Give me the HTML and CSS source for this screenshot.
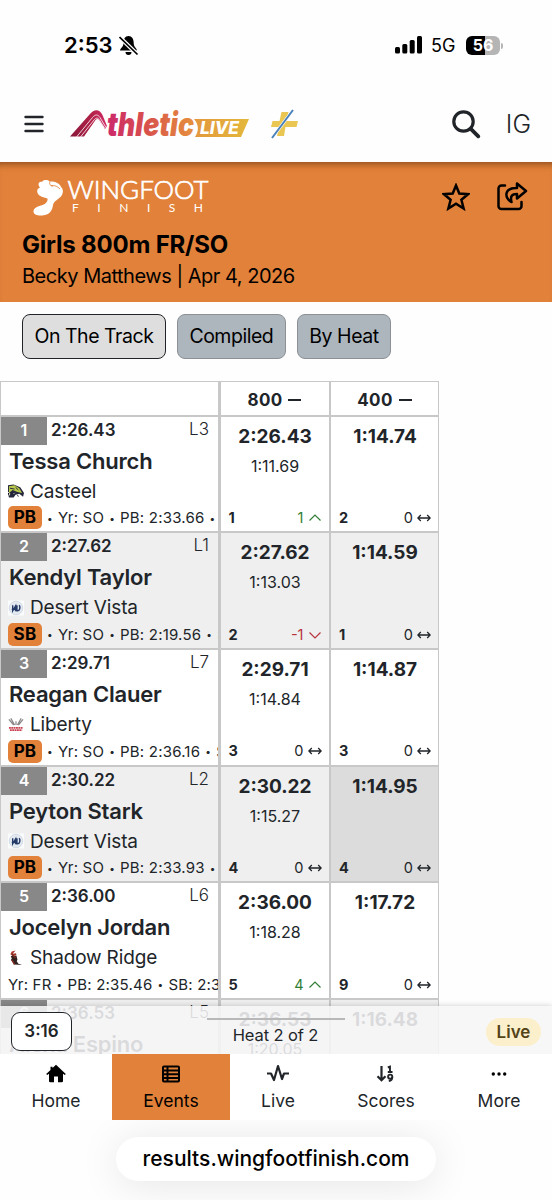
FILE: index.html
```html
<!DOCTYPE html>
<html lang="en">
  <head>
    <meta charset="UTF-8" />
    <meta name="viewport" content="width=device-width, initial-scale=1.0" />
    <title>Girls 800m FR/SO</title>
    <link rel="stylesheet" href="styles.css" />
  </head>
  <body>
    <svg class="sprite" width="0" height="0">
      <symbol id="up" viewBox="0 0 14 14">
        <path d="M1.500 9.500 7 4l5.500 5.500" fill="none" stroke="currentColor" stroke-width="1.200" />
      </symbol>
      <symbol id="down" viewBox="0 0 14 14">
        <path d="M1.500 4.500 7 10l5.500-5.500" fill="none" stroke="currentColor" stroke-width="1.200" />
      </symbol>
      <symbol id="same" viewBox="0 0 14 14">
        <path d="M1 7h12M3.800 4 .8 7l3 3M10.200 4l3 3-3 3" fill="none" stroke="currentColor" stroke-width="1.300" />
      </symbol>
      <symbol id="casteel" viewBox="0 0 17 16">
        <path d="M0 2 6 1l7 3 4 6-1 4-4-3-4 1-2 3H1l-1-4z" fill="#24263b" />
        <path d="M1 3 7 2l5 3 3 5-5-1-5-2-4 3z" fill="#b7c84b" />
        <path d="m2 5 5 1M8 4l3 3M2 11l1 2M10 12l1 2" stroke="#24263b" />
        <path d="m0 9 2 2-1 2M6 11l1-1" stroke="#e8eddb" />
      </symbol>
      <symbol id="vista" viewBox="0 0 17 16">
        <path fill="#fafbfc" d="M0 0h17v16H0z" />
        <circle cx="8.500" cy="8" r="7.200" fill="#e4eaf0" stroke="#c8d3df" stroke-width=".8" />
        <path d="M5 5v6l3-5v5.500M4 9.500h5M9.500 5v6c3.500.5 3.500-4 2.500-6" fill="none" stroke="#243a68" stroke-width="1.500" />
      </symbol>
      <symbol id="liberty" viewBox="0 0 17 16">
        <path d="m1 2 5 6M3 1l4 7M16 2l-5 6M14 1l-4 7M8.500 4v4" stroke="#8a8687" stroke-width="1.300" />
        <path d="M1 11h15M2 13.500h13" stroke="#c9404f" stroke-width="2" stroke-dasharray="2 .5" />
      </symbol>
      <symbol id="ridge" viewBox="0 0 17 16">
        <path d="M8 0 4 1 2.500 4l3 2L9 5 8.500 3 5 3.500z" fill="#a5342a" />
        <path d="m3 6 6-.5 1 4-1 3-3-1-3-1 1-2zM5 11l4 0 2 3 4 1.500-8-.5z" fill="#30211f" />
        <path d="m4 4 4 4M4 10l3 5" stroke="#7c2b20" stroke-width="1.500" />
      </symbol>
    </svg>

    <div class="statusbar">
      <span class="clock">2:53</span>
      <svg class="bell" width="20" height="21" viewBox="0 0 20 21">
        <path d="M9.500 1C6 1 4.500 4 4.500 8c0 4-3 5-3.500 7.500h17C17.500 13 14.700 12 14.700 8c0-4-1.700-7-5.200-7zM6.500 17h6a3 3 0 0 1-6 0z" />
        <path d="m.5 2 18 17.500" stroke="#fff" stroke-width="4" />
        <path d="m.5 2 18 17.500" stroke="#000" stroke-width="1.700" />
      </svg>
      <svg class="signal" width="28" height="18" viewBox="0 0 28 18">
        <rect x="0" y="11" width="5" height="6.500" rx="1.500" />
        <rect x="7.300" y="8" width="5" height="9.500" rx="1.500" />
        <rect x="14.700" y="4" width="5" height="13.500" rx="1.500" />
        <rect x="22" y="0" width="5" height="17.500" rx="1.500" />
      </svg>
      <span class="network">5G</span>
      <span class="battery">56</span>
    </div>

    <header>
      <svg class="menu" width="20" height="18" viewBox="0 0 20 18">
        <path d="M1.500 2h17M1.500 9h17M1.500 16h17" stroke="#212529" stroke-width="2.400" stroke-linecap="round" />
      </svg>
      <svg class="logo" width="180" height="32" viewBox="0 0 180 32">
        <defs>
          <linearGradient id="brand" gradientUnits="userSpaceOnUse" x1="36" y1="0" x2="125" y2="0">
            <stop offset="0" stop-color="#cb286b" />
            <stop offset=".45" stop-color="#d8504c" />
            <stop offset="1" stop-color="#e6923d" />
          </linearGradient>
          <linearGradient id="peak" x1="0" y1="0" x2="1" y2="0">
            <stop offset="0" stop-color="#87173a" />
            <stop offset=".6" stop-color="#b32248" />
            <stop offset="1" stop-color="#d12c68" />
          </linearGradient>
          <linearGradient id="live" x1="0" y1="0" x2="1" y2="0">
            <stop offset="0" stop-color="#e4973d" />
            <stop offset="1" stop-color="#e3b83c" />
          </linearGradient>
        </defs>
        <path d="M0 28.500 20 6c4-5.500 10-5 12.500 1L37 18l-2 3-6-9c-1-1.500-2.500-1-3.500 0L14 28.500z" fill="url(#peak)" />
        <path d="M6.500 29 22.500 9.500c3-3.500 5.500-3 7.500 0l6 10M10.500 29 24 12c2-2.500 4-2.500 5.500 0l5 8" fill="none" stroke="#fff" stroke-width=".8" />
        <text class="brand-name" x="37" y="28" textLength="87" lengthAdjust="spacingAndGlyphs">thletic</text>
        <path d="M124 11h55l-8 18h-46c4-6 4-12-1-18z" fill="url(#live)" />
        <text class="brand-live" x="130" y="26" textLength="39" lengthAdjust="spacingAndGlyphs">LIVE</text>
      </svg>
      <svg class="plus" width="30" height="30" viewBox="0 0 30 30">
        <path d="M12.500 3h7l-2 9H29l-1.500 6h-11l-1.500 9H8l2-9H2l1.500-6h7z" fill="#e9c752" />
        <path d="M24 1 3 29" stroke="#fff" stroke-width="3" />
        <path d="M24 1 3 29" stroke="#4b82bb" stroke-width="2" />
      </svg>
      <svg class="search" width="29" height="29" viewBox="0 0 29 29">
        <circle cx="11.500" cy="11.500" r="9.700" fill="none" stroke="#212529" stroke-width="3.200" />
        <path d="m18.800 18.800 7.500 7.500" stroke="#212529" stroke-width="3.800" stroke-linecap="round" />
      </svg>
      <span class="initials">IG</span>
    </header>

    <section class="banner">
      <div class="banner-top">
        <svg class="wingfoot" width="180" height="38" viewBox="0 0 180 38">
          <path d="M5 16C3.500 13 4 11 7 9.500 4 6 6 3 9 4c1-2.500 6-2.500 7.500-.5C21 3 27 5 28 9c2.500 2 2.500 6 0 9.500-3 3-7 4.500-8 8.500-.5 5-3 9-8 10-6 1.500-11.500 0-11.500-3.500 0-4 5-5.500 9-6.500 4-1.500 5.500-4 5-6.500C12 19.500 7 19 5 16z" fill="#fff" />
          <path d="M17 3.500c-1 3 0 4 3 4.500M18 8c3-1 6 0 9 3" fill="none" stroke="#e28139" stroke-width=".9" />
          <text class="wing" x="34.500" y="21" textLength="141" lengthAdjust="spacingAndGlyphs">WINGFOOT</text>
          <text class="finish" x="39" y="33.500" textLength="131">FINISH</text>
        </svg>
        <svg class="star" width="28" height="28" viewBox="0 0 28 28">
          <path d="m14 2.500 3.300 8 8.700.7-6.600 5.600 2.200 8.700-7.600-4.800-7.600 4.800 2.200-8.700L2 11.200l8.700-.7z" fill="none" stroke="#000" stroke-width="2.500" />
        </svg>
        <svg class="share" width="32" height="30" viewBox="0 0 32 30">
          <path d="M9 4.500H5.500a3 3 0 0 0-3 3V25a3 3 0 0 0 3 3h17a3 3 0 0 0 3-3v-4" fill="none" stroke="#000" stroke-width="2.500" stroke-linecap="round" />
          <path d="M21 2.500 30 10l-9 7.500V13c-5 0-7 2-5.500 8C8 17 8 6.500 21 7z" fill="none" stroke="#000" stroke-width="2.500" stroke-linejoin="round" />
        </svg>
      </div>
      <h1>Girls 800m FR/SO</h1>
      <p>Becky Matthews | Apr 4, 2026</p>
    </section>

    <nav class="views">
      <button class="chosen">On The Track</button>
      <button>Compiled</button>
      <button>By Heat</button>
    </nav>

    <main>
      <div class="results">
        <div class="head"></div>
        <div class="head">800 <i></i></div>
        <div class="head">400 <i></i></div>

        <article>
          <div class="top"><b class="place">1</b><b class="time">2:26.43</b><span class="lane">L3</span></div>
          <h2>Tessa Church</h2>
          <p class="school"><svg><use href="#casteel" /></svg>Casteel</p>
          <p class="info"><b class="best">PB</b><i>•</i>Yr: SO<i>•</i>PB: 2:33.66<i>•</i></p>
        </article>
        <div class="split">
          <b class="total">2:26.43</b><span class="lap">1:11.69</span>
          <div class="rank"><b>1</b><span class="gain">1<svg><use href="#up" /></svg></span></div>
        </div>
        <div class="split">
          <b class="total">1:14.74</b>
          <div class="rank"><b>2</b><span>0<svg><use href="#same" /></svg></span></div>
        </div>

        <article class="grey">
          <div class="top"><b class="place">2</b><b class="time">2:27.62</b><span class="lane">L1</span></div>
          <h2>Kendyl Taylor</h2>
          <p class="school"><svg><use href="#vista" /></svg>Desert Vista</p>
          <p class="info"><b class="best">SB</b><i>•</i>Yr: SO<i>•</i>PB: 2:19.56<i>•</i>S</p>
        </article>
        <div class="split grey">
          <b class="total">2:27.62</b><span class="lap">1:13.03</span>
          <div class="rank"><b>2</b><span class="loss">-1<svg><use href="#down" /></svg></span></div>
        </div>
        <div class="split grey">
          <b class="total">1:14.59</b>
          <div class="rank"><b>1</b><span>0<svg><use href="#same" /></svg></span></div>
        </div>

        <article>
          <div class="top"><b class="place">3</b><b class="time">2:29.71</b><span class="lane">L7</span></div>
          <h2>Reagan Clauer</h2>
          <p class="school"><svg><use href="#liberty" /></svg>Liberty</p>
          <p class="info"><b class="best">PB</b><i>•</i>Yr: SO<i>•</i>PB: 2:36.16<i>•</i>S</p>
        </article>
        <div class="split">
          <b class="total">2:29.71</b><span class="lap">1:14.84</span>
          <div class="rank"><b>3</b><span>0<svg><use href="#same" /></svg></span></div>
        </div>
        <div class="split">
          <b class="total">1:14.87</b>
          <div class="rank"><b>3</b><span>0<svg><use href="#same" /></svg></span></div>
        </div>

        <article class="grey">
          <div class="top"><b class="place">4</b><b class="time">2:30.22</b><span class="lane">L2</span></div>
          <h2>Peyton Stark</h2>
          <p class="school"><svg><use href="#vista" /></svg>Desert Vista</p>
          <p class="info"><b class="best">PB</b><i>•</i>Yr: SO<i>•</i>PB: 2:33.93<i>•</i></p>
        </article>
        <div class="split grey">
          <b class="total">2:30.22</b><span class="lap">1:15.27</span>
          <div class="rank"><b>4</b><span>0<svg><use href="#same" /></svg></span></div>
        </div>
        <div class="split latest">
          <b class="total">1:14.95</b>
          <div class="rank"><b>4</b><span>0<svg><use href="#same" /></svg></span></div>
        </div>

        <article>
          <div class="top"><b class="place">5</b><b class="time">2:36.00</b><span class="lane">L6</span></div>
          <h2>Jocelyn Jordan</h2>
          <p class="school"><svg><use href="#ridge" /></svg>Shadow Ridge</p>
          <p class="info">Yr: FR<i>•</i>PB: 2:35.46<i>•</i>SB: 2:3</p>
        </article>
        <div class="split">
          <b class="total">2:36.00</b><span class="lap">1:18.28</span>
          <div class="rank"><b>5</b><span class="gain">4<svg><use href="#up" /></svg></span></div>
        </div>
        <div class="split">
          <b class="total">1:17.72</b>
          <div class="rank"><b>9</b><span>0<svg><use href="#same" /></svg></span></div>
        </div>

        <article class="grey">
          <div class="top"><b class="place">6</b><b class="time">2:36.53</b><span class="lane">L5</span></div>
          <h2>Alexa Espino</h2>
        </article>
        <div class="split grey"><b class="total">2:36.53</b><span class="lap">1:20.05</span></div>
        <div class="split grey"><b class="total">1:16.48</b></div>
      </div>

      <div class="heatbar">
        <span class="timer">3:16</span>
        <div class="heat">Heat 2 of 2</div>
        <span class="live">Live</span>
      </div>
    </main>

    <nav class="tabs">
      <a>
        <svg viewBox="0 0 20 20"><path d="M10 .8 6.500 4V2.800H4.500V6L.2 10l1 1L3 9.800V17q0 1.300 1.300 1.300H8V12.500h4v5.800h3.700q1.300 0 1.300-1.300V9.800L18.800 11l1-1z" /></svg>
        Home
      </a>
      <a class="current">
        <svg viewBox="0 0 20 20"><path d="M3 2.500h14q1 0 1 1v13q0 1-1 1H3q-1 0-1-1v-13q0-1 1-1zM2 6.500h16M2 10.200h16M2 13.900h16M6.500 3v14" fill="none" stroke="currentColor" stroke-width="2" /></svg>
        Events
      </a>
      <a>
        <svg class="wide" viewBox="0 0 24 20"><path d="M1 9.500h4L8 16l4-14 4 13 2-5.500h5" fill="none" stroke="currentColor" stroke-width="2.200" stroke-linejoin="round" /></svg>
        Live
      </a>
      <a>
        <svg viewBox="0 0 20 20">
          <path d="M5.500 2v14M1.500 12.300l4 4 4-4" fill="none" stroke="currentColor" stroke-width="2.200" />
          <path d="M11.800 3.500 14 2.600V8M11.800 8h4.700" fill="none" stroke="currentColor" stroke-width="1.900" />
          <circle cx="14.200" cy="12.700" r="2.100" fill="none" stroke="currentColor" stroke-width="1.900" />
          <path d="M16.300 13q0 3.500-3.500 4" fill="none" stroke="currentColor" stroke-width="1.900" />
        </svg>
        Scores
      </a>
      <a>
        <svg viewBox="0 0 20 20"><circle cx="4.300" cy="10" r="1.700" /><circle cx="10" cy="10" r="1.700" /><circle cx="15.700" cy="10" r="1.700" /></svg>
        More
      </a>
    </nav>

    <footer>
      <div class="address">results.wingfootfinish.com</div>
    </footer>
  </body>
</html>
```

FILE: styles.css
```css
* {
  box-sizing: border-box;
}

body {
  margin: 0;
  width: 552px;
  height: 1200px;
  overflow: hidden;
  display: flex;
  flex-direction: column;
  background-color: #fefefe;
  color: #212529;
  font-family: Inter, "Liberation Sans", sans-serif;
}

h1,
h2,
p {
  margin: 0;
}

b {
  font-weight: 600;
}

svg {
  display: block;
  flex: none;
}

.sprite {
  display: none;
}

.statusbar {
  height: 84px;
  padding: 6px 52px 0 64px;
  display: flex;
  align-items: center;
  color: #000;
}

.clock {
  width: 55px;
  font-size: 22px;
  font-weight: 600;
}

.signal {
  margin-left: auto;
}

.network {
  margin-left: 8px;
  width: 35px;
  font-size: 18px;
}

.battery {
  position: relative;
  width: 34px;
  height: 19px;
  border-radius: 6px;
  background: linear-gradient(90deg, #000 56%, #b5b5b5 56%);
  color: #fff;
  font-size: 16px;
  font-weight: 700;
  line-height: 19px;
  text-align: center;
}

.battery::after {
  content: "";
  position: absolute;
  right: -3px;
  top: 7px;
  width: 2px;
  height: 6px;
  border-radius: 0 2px 2px 0;
  background-color: #b5b5b5;
}

header {
  height: 78px;
  padding: 2px 21px 0 24px;
  display: flex;
  align-items: center;
}

.logo {
  margin-left: 26px;
}

.brand-name {
  font: italic 900 33px Inter, sans-serif;
  fill: url(#brand);
}

.brand-live {
  font: italic 800 17px Inter, sans-serif;
  fill: #fff;
}

.plus {
  margin-left: 19px;
}

.search {
  margin-left: auto;
}

.initials {
  margin-left: 25px;
  font-size: 25px;
  font-weight: 300;
}

.banner {
  height: 140px;
  padding: 16px 24px 0 22px;
  background-color: #e28139;
  color: #000;
  box-shadow: inset 0 8px 7px -6px rgba(80, 40, 10, 0.6);
}

.banner-top {
  height: 50px;
  display: flex;
  align-items: flex-start;
}

.wingfoot {
  margin-left: 11px;
}

.wing {
  font: 300 26px Lato, sans-serif;
  fill: #fff;
  stroke: #fff;
  stroke-width: 0.7px;
}

.finish {
  font: 400 12px Lato, sans-serif;
  fill: #fff;
}

.star {
  margin: 5px 26px 0 auto;
}

.share {
  margin-top: 3px;
}

.banner h1 {
  font-size: 24px;
  line-height: 34px;
  font-weight: 700;
  letter-spacing: -0.2px;
}

.banner p {
  font-size: 20px;
  line-height: 29px;
  letter-spacing: -0.48px;
}

.views {
  display: flex;
  gap: 11px;
  padding: 12px 22px 22px;
}

.views button {
  height: 45px;
  padding: 0 11.500px;
  padding-bottom: 2px;
  border: 1px solid #8d9196;
  border-radius: 8px;
  background-color: #adb5bd;
  color: #000;
  font: 400 19.500px Inter, sans-serif;
  letter-spacing: -0.47px;
}

.views .chosen {
  border-color: #212529;
  background-color: #dedede;
}

main {
  position: relative;
  flex: 1;
  overflow: hidden;
}

.results {
  width: 439px;
  display: grid;
  grid-template-columns: 217px 108px 107px;
  grid-template-rows: 32.700px repeat(6, 114.700px);
  gap: 2px 2.500px;
  padding: 1px;
  background-color: #c8c8c8;
}

.results > * {
  min-width: 0;
  overflow: hidden;
  background-color: #fff;
}

.head {
  display: flex;
  justify-content: center;
  align-items: center;
  gap: 6px;
  padding-top: 4px;
  font-size: 17px;
  font-weight: 700;
  letter-spacing: 0.3px;
}

.head i {
  width: 13px;
  height: 1.500px;
  margin-top: -1px;
  background-color: #212529;
}

.results .grey {
  background-color: #efefef;
}

.results .latest {
  background-color: #dcdcdc;
}

.top {
  display: flex;
  height: 28px;
  line-height: 27px;
}

.place {
  width: 46px;
  background-color: #888;
  color: #fff;
  font-size: 16px;
  text-align: center;
}

.time {
  margin-left: 4px;
  font-size: 17px;
}

.lane {
  margin: -1px 9px 0 auto;
  font-size: 17px;
  font-weight: 300;
}

article h2 {
  padding-left: 8px;
  font-size: 22px;
  line-height: 33px;
  font-weight: 600;
  letter-spacing: -0.2px;
}

.school {
  display: flex;
  align-items: center;
  gap: 6px;
  height: 27px;
  padding-left: 7px;
  font-size: 19px;
  letter-spacing: -0.15px;
}

.school svg {
  width: 16px;
  height: 16px;
}

.info {
  display: flex;
  align-items: center;
  height: 26px;
  padding-left: 7px;
  white-space: nowrap;
  font-size: 15px;
  letter-spacing: 0.2px;
}

.info i {
  width: 16px;
  flex: none;
  font-size: 10px;
  font-style: normal;
  text-align: center;
}

.best {
  width: 34px;
  height: 23px;
  flex: none;
  border-radius: 5px;
  background-color: #e28139;
  color: #000;
  font-size: 17px;
  font-weight: 700;
  line-height: 23px;
  text-align: center;
}

.split {
  display: flex;
  flex-direction: column;
  align-items: center;
  padding: 6px 7px 3.500px 8px;
}

.total {
  font-size: 19px;
  line-height: 27px;
  font-weight: 700;
}

.lap {
  font-size: 16px;
  line-height: 32px;
}

.rank {
  width: 100%;
  margin-top: auto;
  display: flex;
  justify-content: space-between;
  font-size: 14.500px;
  line-height: 20px;
}

.rank span {
  display: flex;
  align-items: center;
  gap: 4px;
}

.rank b {
  font-weight: 700;
}

.rank svg {
  width: 14px;
  height: 14px;
}

.gain {
  color: #2f7d32;
}

.loss {
  color: #b8343c;
}

.heatbar {
  position: absolute;
  left: 0;
  right: 0;
  bottom: 0;
  height: 48px;
  padding: 0 11px;
  display: flex;
  justify-content: space-between;
  align-items: center;
  background-color: rgba(246, 246, 247, 0.87);
  box-shadow: 0 0 6px rgba(0, 0, 0, 0.2);
}

.timer {
  width: 61px;
  height: 39px;
  margin-top: 2px;
  border: 1.500px solid #212529;
  border-radius: 9px;
  background-color: #fff;
  font-size: 17px;
  font-weight: 600;
  line-height: 36px;
  text-align: center;
}

.heat {
  width: 138px;
  height: 36px;
  margin: 12px 7px 0 0;
  border-top: 2px solid #b8b8b8;
  font-size: 16.500px;
  letter-spacing: -0.1px;
  line-height: 31px;
  text-align: center;
}

.live {
  width: 55px;
  height: 28px;
  margin-top: 3px;
  border-radius: 14px;
  background-color: #fbf0cb;
  color: #534318;
  font-size: 17px;
  font-weight: 600;
  line-height: 28px;
  text-align: center;
}

.tabs {
  position: relative;
  height: 66px;
  display: grid;
  grid-template-columns: 112px 118px 96px 120px 106px;
  background-color: #fff;
}

.tabs a {
  display: flex;
  flex-direction: column;
  align-items: center;
  padding-top: 10px;
  font-size: 17.500px;
  line-height: 33px;
}

.tabs svg {
  width: 20px;
  height: 20px;
}

.tabs .wide {
  width: 24px;
}

.tabs .current {
  background-color: #e28139;
  color: #000;
}

footer {
  height: 80px;
  padding-top: 17px;
}

.address {
  width: 320px;
  height: 44px;
  margin: 0 auto;
  border-radius: 22px;
  background-color: #fff;
  color: #000;
  box-shadow: 0 4px 40px rgba(0, 0, 0, 0.1);
  font-size: 21px;
  font-weight: 500;
  line-height: 44px;
  text-align: center;
}
```
